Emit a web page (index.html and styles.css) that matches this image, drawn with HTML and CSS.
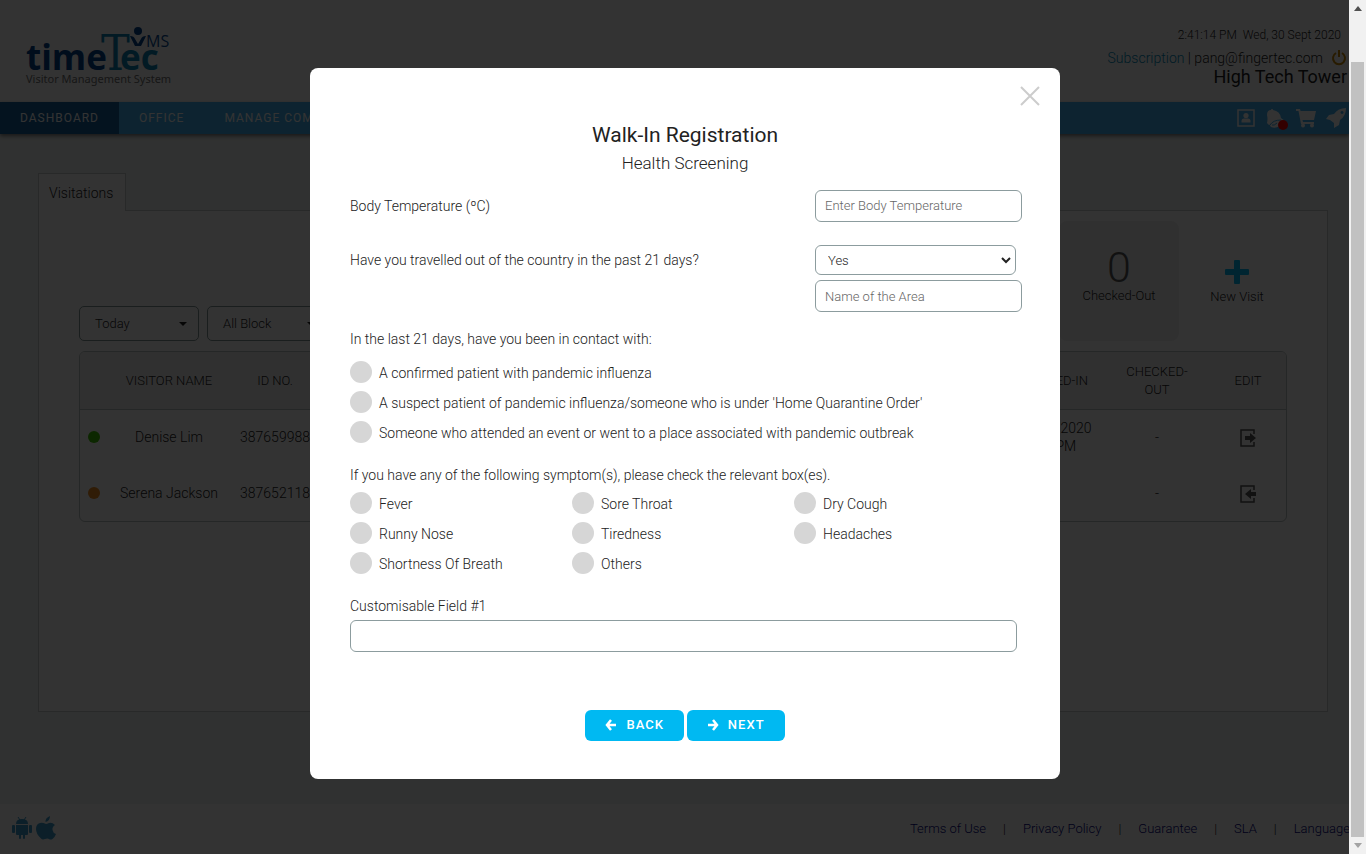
FILE: index.html
```html
<!DOCTYPE html>
<html lang="en">
<head>
<meta charset="utf-8">
<title>TimeTec VMS</title>
<link rel="stylesheet" href="styles.css">
</head>
<body>
<div class="app">
  <header class="header">
    <a href="#" class="logo" aria-label="TimeTec VMS">
      <svg width="150" height="66" viewBox="0 0 150 66">
        <text class="logo-time" x="2" y="46">time</text>
        <text class="logo-t" x="77" y="46">T</text>
        <text class="logo-ec" x="96" y="46">ec</text>
        <circle class="logo-mark" cx="114" cy="7" r="4"/>
        <path class="logo-mark" d="M106 12q4 0 5 3l3 5 3-5q1-3 5-3l-5 10h-6z"/>
        <text class="logo-ms" x="122" y="23">MS</text>
        <text class="logo-tag" x="2" y="59">Visitor Management System</text>
      </svg>
    </a>
    <div class="account">
      <p class="clock">2:41:14 PM&nbsp; Wed, 30 Sept 2020</p>
      <p class="user"><span><a href="#">Subscription</a> | pang@fingertec.com</span>
        <button class="bare power" aria-label="Log out"><svg width="16" height="16" viewBox="0 0 16 16"><path d="M5 3a6 6 0 1 0 6 0M8 0v7" fill="none" stroke="currentColor" stroke-width="2"/></svg></button>
      </p>
      <p class="tenant">High Tech Tower</p>
    </div>
  </header>

  <nav class="nav">
    <a href="#" class="nav-link active">DASHBOARD</a>
    <a href="#" class="nav-link">OFFICE</a>
    <a href="#" class="nav-link">MANAGE COMPANY</a>
    <div class="nav-tools">
      <button class="bare" aria-label="Directory"><svg width="20" height="20" viewBox="0 0 20 20" fill="currentColor"><path d="M2 2h16v16H2z" fill="none" stroke="currentColor" stroke-width="1.500"/><circle cx="10" cy="7.500" r="2.600"/><path d="M5.500 14.500v-1.500q0-2.500 2.500-2.500h4q2.500 0 2.500 2.500v1.500z"/></svg></button>
      <button class="bare bell" aria-label="Notifications"><svg width="20" height="20" viewBox="0 0 20 20" fill="currentColor"><path d="M1 15q1-4 0-8Q1 2 5 2q0-1.500 1.500-1Q7 1 7 2q7 1 8 8l4 3q0 3-5 5-5 3-9 1-1-1-1-2-2 0-3-2z"/><path d="M4 17q3-5 11-5M6 17q2 1 5-2" fill="none" stroke="#41afee" stroke-width="1"/></svg><i class="badge"></i></button>
      <button class="bare" aria-label="Cart"><svg width="20" height="20" viewBox="0 0 20 20" fill="currentColor"><path d="M0 1h4l.6 2H20l-2 9H6.500l.5 2h11v2H5L2.500 3H0z"/><circle cx="7" cy="17.500" r="2"/><circle cx="16" cy="17.500" r="2"/></svg></button>
      <button class="bare" aria-label="Quick start"><svg width="20" height="20" viewBox="0 0 20 20"><path fill="currentColor" fill-rule="evenodd" d="M20 0q0 8-6 12l-1 5-5 3v-5l-4-3-4-1 3-4 5-1q4-6 12-6zm-4 3a1.500 1.500 0 1 0 .1 0z"/></svg></button>
    </div>
  </nav>

  <main class="main">
    <div class="tab">Visitations</div>
    <section class="panel">
      <div class="toolbar">
        <div class="filters">
          <button class="filter">Today<i class="caret"></i></button>
          <button class="filter">All Block<i class="caret"></i></button>
        </div>
        <div class="stats">
          <div class="stat"><strong>0</strong><span>Checked-Out</span></div>
          <button class="bare new-visit"><svg width="24" height="24" viewBox="0 0 24 24"><path d="M9 1q0-1 1-1h4q1 0 1 1v8h8q1 0 1 1v4q0 1-1 1h-8v8q0 1-1 1h-4q-1 0-1-1v-8H1q-1 0-1-1v-4q0-1 1-1h8z" fill="#00b9f2"/></svg><span>New Visit</span></button>
        </div>
      </div>
      <div class="table-wrap">
        <table class="visits">
          <colgroup><col class="c-dot"><col class="c-name"><col class="c-id"><col><col class="c-time"><col class="c-time"><col class="c-edit"></colgroup>
          <thead><tr><th></th><th>VISITOR NAME</th><th>ID NO.</th><th></th><th>CHECKED-IN</th><th>CHECKED-OUT</th><th>EDIT</th></tr></thead>
          <tbody>
            <tr><td><i class="dot green"></i></td><td>Denise Lim</td><td>387659988</td><td></td><td>30 Sept 2020<br>2:40 PM</td><td>-</td>
              <td><button class="bare edit" aria-label="Check out"><svg width="16" height="18" viewBox="0 0 16 18"><path d="M14 5V1H1v16h13v-4" fill="none" stroke="currentColor" stroke-width="1.500"/><path d="M5 7h5V4l6 5-6 5v-3H5z" fill="currentColor"/></svg></button></td></tr>
            <tr><td><i class="dot orange"></i></td><td>Serena Jackson</td><td>387652118</td><td></td><td></td><td>-</td>
              <td><button class="bare edit" aria-label="Check in"><svg width="16" height="18" viewBox="0 0 16 18"><path d="M14 5V1H1v16h13v-4" fill="none" stroke="currentColor" stroke-width="1.500"/><path d="M16 7h-5V4L5 9l6 5v-3h5z" fill="currentColor"/></svg></button></td></tr>
          </tbody>
        </table>
      </div>
    </section>
  </main>

  <footer class="footer">
    <div class="stores">
      <a href="#" aria-label="Android app"><svg width="20" height="24" viewBox="0 0 20 24" fill="currentColor"><path d="M4 8q0-5 6-5t6 5zM4 9h12v9q0 1-1 1h-2v3q0 1-1 1t-1-1v-3H9v3q0 1-1 1t-1-1v-3H5q-1 0-1-1z"/><rect x="0" y="9" width="3" height="8" rx="1"/><rect x="17" y="9" width="3" height="8" rx="1"/><path d="M6 1l2 3M14 1l-2 3" stroke="currentColor"/></svg></a>
      <a href="#" aria-label="iOS app"><svg width="20" height="24" viewBox="0 0 20 24" fill="currentColor"><path d="M14 0q0 5-4.500 6Q9 2 14 0zM10 8q1 0 3-1 3-1 6 2-3 2-2.500 5 .5 3 3.500 4-1 3-3.500 5-2 1-3.500 0t-4 0-4-.5Q0 18 0 13t4-6q2-1 6 1z"/></svg></a>
    </div>
    <nav class="legal">
      <a href="#">Terms of Use</a><span>|</span><a href="#">Privacy Policy</a><span>|</span><a href="#">Guarantee</a><span>|</span><a href="#">SLA</a><span>|</span><a href="#">Language</a>
    </nav>
  </footer>
</div>

<div class="overlay">
  <form class="modal" role="dialog" aria-labelledby="dialog-title">
    <button type="button" class="bare close" aria-label="Close"><svg width="20" height="20" viewBox="0 0 20 20"><path d="M1 1l18 18M19 1L1 19" stroke="#ccc" stroke-width="2"/></svg></button>
    <h1 id="dialog-title">Walk-In Registration</h1>
    <h2>Health Screening</h2>

    <div class="row">
      <label for="temp">Body Temperature (ºC)</label>
      <div class="controls"><input id="temp" class="field" type="text" placeholder="Enter Body Temperature"></div>
    </div>
    <div class="row travel">
      <label for="travel">Have you travelled out of the country in the past 21 days?</label>
      <div class="controls">
        <div class="select"><select id="travel"><option>Yes</option><option>No</option></select><svg width="10" height="8" viewBox="0 0 10 8"><path d="M1 2l4 4 4-4" fill="none" stroke="#222" stroke-width="2"/></svg></div>
        <input class="field" type="text" placeholder="Name of the Area" aria-label="Name of the Area">
      </div>
    </div>

    <fieldset class="contacts">
      <legend>In the last 21 days, have you been in contact with:</legend>
      <label class="check"><input type="checkbox">A confirmed patient with pandemic influenza</label>
      <label class="check"><input type="checkbox">A suspect patient of pandemic influenza/someone who is under 'Home Quarantine Order'</label>
      <label class="check"><input type="checkbox">Someone who attended an event or went to a place associated with pandemic outbreak</label>
    </fieldset>

    <fieldset class="symptoms">
      <legend>If you have any of the following symptom(s), please check the relevant box(es).</legend>
      <div class="symptom-grid">
        <label class="check"><input type="checkbox">Fever</label>
        <label class="check"><input type="checkbox">Sore Throat</label>
        <label class="check"><input type="checkbox">Dry Cough</label>
        <label class="check"><input type="checkbox">Runny Nose</label>
        <label class="check"><input type="checkbox">Tiredness</label>
        <label class="check"><input type="checkbox">Headaches</label>
        <label class="check"><input type="checkbox">Shortness Of Breath</label>
        <label class="check"><input type="checkbox">Others</label>
      </div>
    </fieldset>

    <div class="custom">
      <label for="custom">Customisable Field #1</label>
      <input id="custom" class="field" type="text">
    </div>

    <div class="actions">
      <button type="button" class="btn"><svg width="12" height="12" viewBox="0 0 12 12"><path d="M6 1L2 6l4 5M2 6h9" fill="none" stroke="currentColor" stroke-width="2.500"/></svg>BACK</button>
      <button type="button" class="btn"><svg width="12" height="12" viewBox="0 0 12 12"><path d="M6 1l4 5-4 5M10 6H1" fill="none" stroke="currentColor" stroke-width="2.500"/></svg>NEXT</button>
    </div>
  </form>
</div>

<div class="scrollbar" aria-hidden="true">
  <i class="arrow up"></i>
  <div class="track"><div class="thumb"></div></div>
  <i class="arrow down"></i>
</div>
</body>
</html>
```
FILE: styles.css
```css
* { box-sizing: border-box; }
body {
  margin: 0;
  padding-right: 17px;
  font: 300 14px/18px Roboto, "Liberation Sans", sans-serif;
  color: #222;
  overflow-x: hidden;
}
p, h1, h2 { margin: 0; }
svg { display: block; }
a { text-decoration: none; }
button, input, select { font: inherit; color: inherit; }
.bare { padding: 0; border: 0; background: none; color: inherit; }

.app { display: flex; flex-direction: column; min-height: 100vh; overflow: hidden; background: #fff; }

.header { display: flex; justify-content: space-between; height: 102px; padding: 24px 2px 0 24px; }
.logo-time { font: 700 35px "Open Sans", sans-serif; fill: #00408c; }
.logo-t { font: 48px "DejaVu Serif Condensed", "DejaVu Serif", serif; fill: #0d82b4; }
.logo-ec { font: 700 35px "Open Sans", sans-serif; fill: #0d82b4; }
.logo-ms { font: 16px "Open Sans", sans-serif; fill: #0a4e96; }
.logo-mark { fill: #00408c; }
.logo-tag { font: 11px "Noto Sans", sans-serif; fill: #707070; }
.account { text-align: right; }
.clock { padding: 2px 6px 0 0; font-size: 12px; }
.user { display: flex; justify-content: flex-end; gap: 8px; margin-top: 4px; line-height: 20px; }
.user a { color: #0089b8; }
.power { color: #c98600; }
.tenant { font-size: 18px; font-weight: 400; }

.nav { display: flex; height: 32px; background: #41afee; color: #fff; box-shadow: 0 2px 4px #777; z-index: 1; }
.nav-link { padding: 7px 20px; color: #fff; font-size: 12px; font-weight: 400; letter-spacing: 1px; }
.nav-link.active { background: #145f9b; }
.nav-tools { display: flex; align-items: center; gap: 10px; margin-left: auto; padding-right: 3px; }
.bell { position: relative; }
.badge { position: absolute; right: -2px; bottom: -2px; width: 10px; height: 10px; border-radius: 50%; background: #f00; }

.main { display: flex; flex: 1; flex-direction: column; padding: 39px 21px 92px 38px; background: #f0f5f3; }
.tab { z-index: 1; align-self: flex-start; height: 38px; margin-bottom: -1px; padding: 10px 12px 0 10px; border: 1px solid #c5cccc; border-bottom: 0; background: #fff; }
.panel { flex: 1; padding: 10px 40px; border: 1px solid #c5cccc; background: #fff; }
.toolbar { display: flex; align-items: flex-end; justify-content: space-between; }
.filters { display: flex; gap: 8px; }
.filter { display: flex; align-items: center; justify-content: space-between; width: 120px; height: 35px; padding: 1px 11px 0 15px; border: 1px solid #829696; border-radius: 5px; background: #fff; font-size: 13px; }
.caret { border: 4px solid transparent; border-top-color: #222; border-bottom: 0; }
.stats { display: flex; }
.stat, .new-visit { display: flex; flex-direction: column; align-items: center; justify-content: center; width: 120px; height: 120px; font-size: 13px; }
.stat { padding-bottom: 10px; border-radius: 8px; background: #f0f0f0; }
.stat strong { color: #555; font-size: 43px; font-weight: 300; line-height: 40px; }
.new-visit { gap: 4px; width: 116px; margin-right: -8px; padding-top: 3px; }

.table-wrap { margin-top: 10px; border: 1px solid #b8c0c0; border-radius: 6px; overflow: hidden; }
.visits { width: 100%; table-layout: fixed; border-collapse: collapse; text-align: center; }
.visits th { height: 57px; padding: 1px 20px 0; border-bottom: 1px solid #b8c0c0; background: #f0f0f0; font-size: 13px; font-weight: 300; white-space: nowrap; }
.visits th:nth-child(-n+5) { padding: 1px 0 0; }
.visits th:nth-child(6) { white-space: normal; }
.visits th:last-child { padding: 1px 0 0; }
.visits td { height: 56px; padding: 0; }
.c-dot { width: 30px; }
.c-name { width: 118px; }
.c-id { width: 94px; }
.c-time { width: 106px; }
.c-edit { width: 76px; }
.dot { display: block; width: 12px; height: 12px; margin-left: 8px; border-radius: 50%; }
.green { background: #3fc000; }
.orange { background: #f08c1e; }
.edit { vertical-align: middle; color: #555; }

.footer { display: flex; align-items: center; justify-content: space-between; height: 50px; padding-left: 12px; }
.stores { display: flex; gap: 4px; padding-bottom: 2px; }
.stores a { color: #3c9ccb; }
.legal { display: flex; gap: 17px; margin-right: -1px; font-size: 13px; }
.legal a { color: #00007d; }

.overlay { position: absolute; inset: 0; display: flex; align-items: flex-start; justify-content: center; padding: 68px 0 0 4px; background: rgba(0, 0, 0, .8); z-index: 2; }
.modal { position: relative; width: 750px; padding: 55px 40px 38px; border-radius: 8px; background: #fff; }
.close { position: absolute; top: 18px; right: 20px; }
.modal h1 { font-size: 21px; font-weight: 400; line-height: 24px; text-align: center; }
.modal h2 { margin: 6px 0 17px; font-size: 17px; font-weight: 300; line-height: 20px; text-align: center; }
.row { display: grid; grid-template-columns: 1fr 205px; align-items: start; line-height: 32px; }
.travel { margin-top: 23px; line-height: 30px; }
.controls { display: flex; flex-direction: column; gap: 5px; width: 207px; }
.field { width: 100%; height: 32px; padding: 0 9px; border: 1px solid #8c9c9e; border-radius: 6px; background: #fff; font-size: 13px; }
.field::placeholder { color: #666; }
.select { display: grid; align-items: center; width: 201px; height: 30px; }
.select select { grid-area: 1 / 1; width: 100%; height: 30px; padding: 0 12px; border: 1px solid #8c9c9e; border-radius: 6px; appearance: none; background: #fff; font-size: 13px; }
.select svg { grid-area: 1 / 1; justify-self: end; margin-right: 5px; pointer-events: none; }
fieldset { margin: 0; padding: 0; border: 0; }
legend { padding: 0; }
.contacts { margin-top: 18px; }
.contacts legend { margin-bottom: 10px; }
.check { display: flex; align-items: center; gap: 7px; height: 30px; }
.check input { flex: none; appearance: none; width: 22px; height: 22px; margin: 0 0 2px; border-radius: 50%; background: #d6d6d6; }
.check input:checked { background: #00b9f2; }
.symptoms { margin-top: 18px; }
.symptom-grid { display: grid; grid-template-columns: repeat(3, 222px); padding-top: 5px; }
.custom { display: flex; flex-direction: column; gap: 5px; width: 667px; margin-top: 18px; }
.actions { display: flex; justify-content: center; gap: 3px; margin-top: 58px; }
.btn { display: flex; align-items: center; gap: 9px; height: 31px; padding: 0 20px 1px; border: 0; border-radius: 6px; background: #00b9f2; color: #fff; font-size: 13px; font-weight: 500; letter-spacing: 1px; }

.scrollbar { position: fixed; inset: 0 0 0 auto; z-index: 3; display: flex; flex-direction: column; align-items: center; width: 17px; background: #f1f1f1; }
.arrow { margin: 6px 0; border: 4px solid transparent; }
.up { border-top: 0; border-bottom: 5px solid #505050; }
.down { border-bottom: 0; border-top: 5px solid #a3a3a3; }
.track { display: flex; flex: 1; width: 13px; padding-top: 45px; }
.thumb { flex: 1; background: #c1c1c1; }
```
